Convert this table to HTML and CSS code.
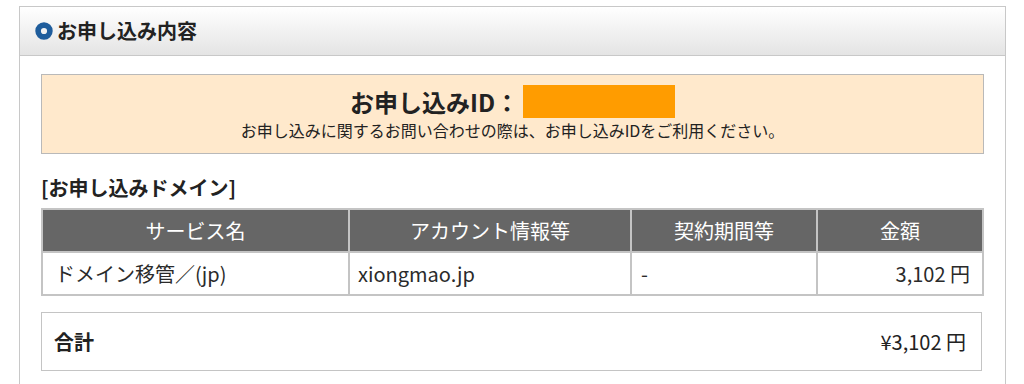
FILE: index.html
```html
<!DOCTYPE html>
<html lang="ja">
<head>
<meta charset="utf-8">
<link rel="stylesheet" href="styles.css">
</head>
<body>
<div class="panel">
  <div class="panel-head">
    <svg class="ring" width="18" height="18" viewBox="0 0 18 18"><circle cx="9" cy="9" r="5.9" fill="none" stroke="#1f5d9c" stroke-width="5.6"/></svg>
    <span class="panel-title">お申し込み内容</span>
  </div>
  <div class="panel-body">
    <div class="idbox">
      <div class="id-line"><span class="id-label">お申し込みID：</span><span class="id-mask"></span></div>
      <div class="id-note">お申し込みに関するお問い合わせの際は、お申し込みIDをご利用ください。</div>
    </div>
    <h3 class="sec-title">[お申し込みドメイン]</h3>
    <table class="items">
      <colgroup>
        <col class="c1"><col class="c2"><col class="c3"><col class="c4">
      </colgroup>
      <thead>
        <tr><th>サービス名</th><th>アカウント情報等</th><th>契約期間等</th><th>金額</th></tr>
      </thead>
      <tbody>
        <tr><td class="name">ドメイン移管／(jp)</td><td class="acct">xiongmao.jp</td><td class="term">-</td><td class="num">3,102 円</td></tr>
      </tbody>
    </table>
    <div class="total">
      <span class="total-label">合計</span>
      <span class="total-value">¥3,102 円</span>
    </div>
  </div>
</div>
</body>
</html>
```
FILE: styles.css
```css
html, body {
  margin: 0;
  padding: 0;
  background: #fff;
}
body {
  font-family: "Noto Sans CJK JP", "Noto Sans", sans-serif;
  color: #222;
  padding-top: 6px;
}
.panel {
  margin-left: 19px;
  width: 985px;
  border: 1px solid #c8c8c8;
  border-bottom: none;
  height: 400px;
}
.panel-head {
  height: 49px;
  display: flex;
  align-items: center;
  padding-left: 15px;
  background: linear-gradient(#ffffff, #e4e4e4);
  border-bottom: 1px solid #c8c8c8;
  box-sizing: border-box;
}
.ring {
  display: block;
  margin-right: 4px;
}
.panel-title {
  font-size: 20px;
  line-height: 24px;
  font-weight: bold;
  color: #222;
}
.panel-body {
  padding: 18px 21px 0 21px;
}
.idbox {
  background: #ffe9cc;
  border: 1px solid #b9b9b9;
  height: 80px;
  box-sizing: border-box;
  text-align: center;
  padding-top: 9px;
}
.id-line {
  display: flex;
  justify-content: center;
  align-items: center;
  height: 35px;
}
.id-label {
  font-size: 24px;
  line-height: 30px;
  font-weight: bold;
  color: #222;
}
.id-mask {
  display: inline-block;
  width: 152px;
  height: 33px;
  background: #ff9c00;
  margin-left: 4px;
}
.id-note {
  font-size: 16px;
  line-height: 20px;
  color: #222;
  margin-top: 1px;
}
.sec-title {
  margin: 22px 0 8px 0;
  font-size: 20px;
  font-weight: bold;
  line-height: 24px;
}
.items {
  width: 941px;
  table-layout: fixed;
  border-collapse: collapse;
  font-size: 20px;
  color: #2a2a2a;
}
.c1 { width: 307px; }
.c2 { width: 282px; }
.c3 { width: 186px; }
.c4 { width: 166px; }
.items th, .items td {
  border: 2px solid #c4c4c4;
}
.items th {
  background: #666;
  color: #fff;
  font-weight: normal;
  height: 41px;
  padding: 0;
  line-height: 24px;
}
.items td {
  height: 41px;
  padding: 0 12px;
  text-align: left;
  line-height: 24px;
}
.items td.acct { padding-left: 8px; }
.items td.term { padding-left: 9px; }
.items td.num { text-align: right; padding-right: 12px; }
.total {
  margin-top: 16px;
  width: 941px;
  height: 59px;
  box-sizing: border-box;
  border: 1px solid #c4c4c4;
  display: flex;
  justify-content: space-between;
  align-items: center;
  padding: 0 15px 0 12px;
  font-size: 20px;
  line-height: 24px;
}
.total-label {
  font-weight: bold;
}
```
